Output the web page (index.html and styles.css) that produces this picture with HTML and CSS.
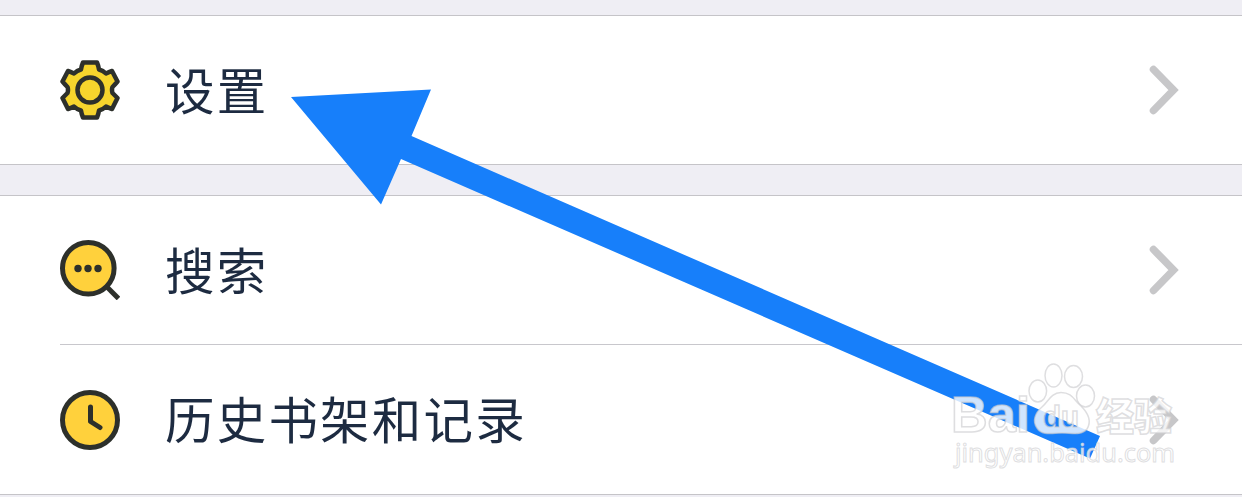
FILE: index.html
```html
<!DOCTYPE html>
<html lang="zh-CN">
<head>
<meta charset="utf-8">
<title>设置</title>
<link rel="stylesheet" href="styles.css">
</head>
<body>
<main class="screen">
  <section class="group">
    <div class="row">
      <svg class="icon" viewBox="0 0 60 60"><path class="line gear" d="M23 2.500H37Q38.500 6 39 9.500Q43 10.500 46 13.500Q49 12 52 11L57.500 21.500Q55 24.500 52.500 27Q51.500 30 52.500 33Q55 35.500 57.500 38L52 49Q49 48 46 46.500Q43 49.500 39 50.500Q38.500 54 37 57.500H23Q21.500 54 21 50.500Q17 49.500 14 46.500Q11 48 8 49L2.500 38Q5 35.500 7.500 33Q8.500 30 7.500 27Q5 24.500 2.500 21.500L8 11Q11 12 14 13.500Q17 10.500 21 9.500Q21.500 6 23 2.500Z"/><circle class="line gear" cx="30" cy="30" r="12.500"/></svg>
      <span class="label">设置</span>
      <svg class="chevron" viewBox="0 0 32 52"><path d="M5.500 5.500L25.500 26L5.500 46.500"/></svg>
    </div>
  </section>
  <section class="group">
    <div class="row">
      <svg class="icon" viewBox="0 0 60 60"><path class="line" d="M47 47L58.500 58.500"/><circle class="line fill" cx="28.300" cy="28.300" r="25.800"/><g class="dots"><circle cx="18" cy="28.500" r="3.700"/><circle cx="28" cy="28.500" r="3.700"/><circle cx="38" cy="28.500" r="3.700"/></g></svg>
      <span class="label">搜索</span>
      <svg class="chevron" viewBox="0 0 32 52"><path d="M5.500 5.500L25.500 26L5.500 46.500"/></svg>
    </div>
    <div class="row divided">
      <svg class="icon" viewBox="0 0 60 60"><circle class="line fill" cx="30" cy="30" r="27.500"/><path class="line hand" d="M30.500 17V31.500L40 37.500"/></svg>
      <span class="label">历史书架和记录</span>
      <svg class="chevron" viewBox="0 0 32 52"><path d="M5.500 5.500L25.500 26L5.500 46.500"/></svg>
    </div>
  </section>
</main>
<svg class="arrow" viewBox="0 0 1242 497"><path d="M291 97L431 89.500L411.500 136L1100 436L1090 458.500L401 159L381 204.500Z"/></svg>
<svg class="watermark" viewBox="0 0 1242 497">
  <mask id="cutout" maskUnits="userSpaceOnUse" x="1020" y="380" width="90" height="60">
    <rect x="1020" y="380" width="90" height="60" fill="#fff"/>
    <text class="du" x="1043" y="427" textLength="36" lengthAdjust="spacingAndGlyphs">du</text>
  </mask>
  <g class="mark">
    <g class="toes">
      <ellipse cx="1037.800" cy="391" rx="8.800" ry="11"/>
      <ellipse cx="1053.500" cy="375.500" rx="8.500" ry="11.500"/>
      <ellipse cx="1073.500" cy="376.500" rx="9" ry="11"/>
      <ellipse cx="1085.500" cy="396" rx="9" ry="11"/>
    </g>
    <path mask="url(#cutout)" d="M1061 392.500C1051 392.500 1048 402 1042 407C1035 413 1032 421 1037 428C1042 436 1052 433 1062 433C1072 433 1081 436 1087 429C1092 421 1088 413 1081 406C1074 400 1072 392.500 1061 392.500Z"/>
    <text class="du du-edge" x="1043" y="427" textLength="36" lengthAdjust="spacingAndGlyphs">du</text>
    <text class="brand" x="951" y="432" textLength="79" lengthAdjust="spacingAndGlyphs">Bai</text>
    <text class="cn" x="1096" y="430" textLength="76" lengthAdjust="spacingAndGlyphs">经验</text>
    <text class="url" x="955" y="462" textLength="220" lengthAdjust="spacingAndGlyphs">jingyan.baidu.com</text>
  </g>
</svg>
</body>
</html>
```
FILE: styles.css
```css
body {
  margin: 0;
  overflow: hidden;
  background: #efeef4;
  font-family: "Noto Sans CJK SC", sans-serif;
}
.screen {
  height: 497px;
  box-sizing: border-box;
  padding-top: 15px;
  display: flex;
  flex-direction: column;
  gap: 30px;
}
.group {
  background: #fff;
  border-top: 1px solid #c5c4c8;
  border-bottom: 1px solid #c5c4c8;
}
.row {
  position: relative;
  height: 148px;
  display: flex;
  align-items: center;
  padding: 0 62px 0 60px;
}
.divided { height: 149px; padding-top: 1px; }
.divided::before {
  content: "";
  position: absolute;
  top: 0;
  left: 60px;
  right: 0;
  height: 1px;
  background: #c8c7cc;
}
.icon { width: 60px; height: 60px; flex: none; }
.line {
  fill: none;
  stroke: #2d302b;
  stroke-width: 5;
  stroke-linejoin: round;
}
.fill { fill: #ffd13c; }
.gear { fill: #f6d52d; stroke-width: 4.5; }
.hand { stroke-linecap: round; }
.dots { fill: #2d302b; }
.label {
  margin-left: 45px;
  padding-bottom: 3px;
  flex: 1;
  font-size: 49.500px;
  font-weight: 400;
  line-height: 74px;
  letter-spacing: 2.200px;
  color: #1d2b41;
}
.chevron { width: 32px; height: 52px; }
.chevron path {
  fill: none;
  stroke: #c7c7c9;
  stroke-width: 7.5;
  stroke-linecap: round;
}
.arrow, .watermark {
  position: absolute;
  top: 0;
  left: 0;
  width: 1242px;
  height: 497px;
}
.arrow { fill: #177ffa; }
.mark {
  fill: rgba(255, 255, 255, .8);
  stroke: rgba(205, 205, 208, .65);
  stroke-width: 1.5;
}
.toes { fill: #fff; }
.brand { font: bold 50px "Liberation Sans", sans-serif; }
.du { font: bold 30px "Liberation Sans", sans-serif; fill: #000; }
.du-edge { fill: none; }
.cn { font: 900 38px "Noto Sans CJK SC", sans-serif; }
.url { font: 25px "Noto Sans", sans-serif; stroke-width: 1; }
```
